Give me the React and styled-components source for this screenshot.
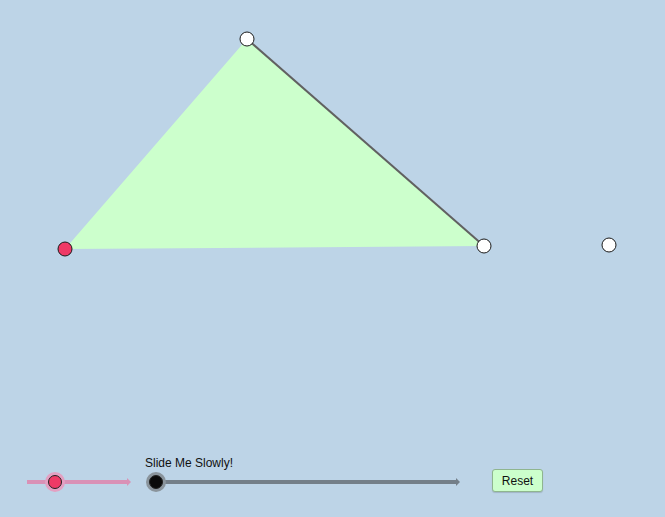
import React from 'react';
import styled, { createGlobalStyle } from 'styled-components';

const GlobalStyle = createGlobalStyle`
    html, body {
        margin: 0;
        padding: 0;
        background: #bdd4e7;
    }
    body {
        font-family: "Liberation Sans", Arial, sans-serif;
    }
`

const Page = styled.div`
    width: 665px;
    height: 517px;
    display: flex;
    flex-direction: column;
    background: #bdd4e7;
    overflow: hidden;
`

const Canvas = styled.svg`
    display: block;
    width: 665px;
    height: 455px;
    flex: none;
`

const ControlBar = styled.div`
    display: flex;
    align-items: flex-start;
    height: 62px;
    padding-left: 27px;
`

const SliderBlock = styled.div`
    display: flex;
    flex-direction: column;
    margin-left: ${props => props.offset || 0}px;
`

const SliderLabel = styled.div`
    font-size: 12px;
    line-height: 14px;
    color: #111;
    margin-top: 1px;
    height: 14px;
`

const Track = styled.div`
    position: relative;
    width: ${props => props.length}px;
    height: 4px;
    margin-top: ${props => props.top}px;
    margin-left: ${props => props.indent || 0}px;
    background: ${props => props.color};

    &::after {
        content: '';
        position: absolute;
        right: -3px;
        top: -2px;
        border-top: 4px solid transparent;
        border-bottom: 4px solid transparent;
        border-left: 4px solid ${props => props.color};
    }
`

const Knob = styled.div`
    position: absolute;
    top: 50%;
    left: ${props => props.at}px;
    width: 12px;
    height: 12px;
    border-radius: 50%;
    background: ${props => props.fill};
    border: 1px solid #222;
    transform: translate(-50%, -50%);
    box-shadow: 0 0 0 3px ${props => props.halo};
    z-index: 1;
`

const ResetButton = styled.button`
    margin-left: 35px;
    margin-top: 14px;
    width: 51px;
    height: 23px;
    padding: 0;
    background: #ccffcc;
    border: 1px solid #8fb58f;
    border-radius: 3px;
    font-family: "Liberation Sans", Arial, sans-serif;
    font-size: 12px;
    color: #111;
    box-shadow: 0 1px 1px rgba(0, 0, 0, 0.15);
`

const points = [
    { x: 65, y: 249, fill: '#ef3a66' },
    { x: 247, y: 39, fill: '#ffffff' },
    { x: 484, y: 246, fill: '#ffffff' },
    { x: 609, y: 245, fill: '#ffffff' },
];

function App() {
    return (
        <Page>
            <GlobalStyle />
            <Canvas viewBox="0 0 665 455">
                <polygon points="65,249 247,39 484,246" fill="#ccffcc" />
                <line x1="247" y1="39" x2="484" y2="246" stroke="#616161" strokeWidth="2" />
                {points.map((p, i) => (
                    <circle key={i} cx={p.x} cy={p.y} r="7" fill={p.fill} stroke="#1a1a1a" strokeWidth="1" />
                ))}
            </Canvas>
            <ControlBar>
                <SliderBlock>
                    <Track length={101} top={25} color="#d991b6">
                        <Knob at={28} fill="#ef3a66" halo="#e3a0c2" />
                    </Track>
                </SliderBlock>
                <SliderBlock offset={17}>
                    <SliderLabel>Slide Me Slowly!</SliderLabel>
                    <Track length={301} top={10} indent={11} color="#747f89">
                        <Knob at={0} fill="#0a0a0a" halo="#8a949c" />
                    </Track>
                </SliderBlock>
                <ResetButton>Reset</ResetButton>
            </ControlBar>
        </Page>
    );
}

export default App;
